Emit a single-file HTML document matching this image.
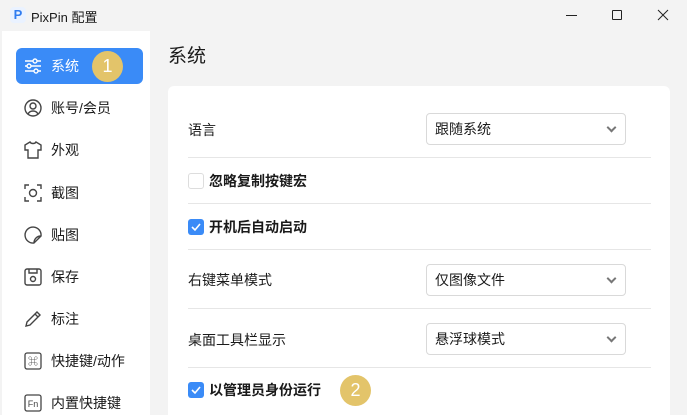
<!DOCTYPE html>
<html><head><meta charset="utf-8"><style>
*{margin:0;padding:0;box-sizing:border-box}
html,body{width:687px;height:415px;overflow:hidden}
body{background:#f3f3f3;font-family:"Liberation Sans","Noto Sans CJK SC",sans-serif;color:#1a1a1a;position:relative}
.abs{position:absolute}
.side{left:2px;top:31px;width:148px;height:384px;background:#fff}
.item{position:absolute;left:16px;width:127px;height:36px;border-radius:6px;font-size:14px;line-height:36px;padding-left:35px}
.item svg{position:absolute;left:8px;top:9px}
.active{background:#3a8bf7;color:#fff}
.card{left:168px;top:86px;width:502px;height:340px;background:#fff;border-radius:6px}
.lbl{position:absolute;left:20px;font-size:14px}
.line{position:absolute;left:20px;right:19px;height:1px;background:#e6e6e6}
.sel{position:absolute;left:258px;width:200px;height:32px;border:1px solid #d9d9d9;border-radius:4px;font-size:14px;line-height:30px;padding-left:8px}
.sel:after{content:"";position:absolute;right:10px;top:10px;width:5px;height:5px;border-right:2px solid #777;border-bottom:2px solid #777;transform:rotate(45deg)}
.cb{position:absolute;left:20px;width:16px;height:16px;border-radius:3px}
.cb.on{background:#3a8bf7}
.cb.off{border:1px solid #ddd}
.cbl{position:absolute;left:41px;font-size:14px;font-weight:bold}
.badge{position:absolute;width:31px;height:31px;border-radius:50%;background:#e3c46a;color:#fff;font-size:18px;text-align:center;line-height:31px}
</style></head><body>
<div class="abs" style="left:10px;top:7px;width:16px;height:16px;border-radius:4px;background:#eaf2ff;color:#2f7cf0;font-weight:bold;font-size:13px;line-height:16px;text-align:center">P</div>
<div class="abs" style="left:31px;top:7px;font-size:13px">PixPin 配置</div>
<div class="abs" style="left:566px;top:15px;width:11px;height:1px;background:#222"></div>
<div class="abs" style="left:612px;top:10px;width:10px;height:10px;border:1px solid #222;border-radius:1px"></div>
<svg class="abs" style="left:657px;top:9px" width="12" height="12"><path d="M1 1L11 11M11 1L1 11" stroke="#222" stroke-width="1"/></svg>
<div class="abs side"></div>
<div class="item active" style="top:48px"><svg width="18" height="18" fill="none" stroke="#fff" stroke-width="1.4"><path d="M1 4h16M1 9h16M1 14h16"/><circle cx="11" cy="4" r="2" fill="#3a8bf7"/><circle cx="5" cy="9" r="2" fill="#3a8bf7"/><circle cx="12" cy="14" r="2" fill="#3a8bf7"/></svg>系统</div>
<div class="badge" style="left:92px;top:51px">1</div>
<div class="item" style="top:90px"><svg width="18" height="18" fill="none" stroke="#444" stroke-width="1.4"><circle cx="9" cy="9" r="8"/><circle cx="9" cy="7" r="3"/><path d="M4 15c2-4 8-4 10 0"/></svg>账号/会员</div>
<div class="item" style="top:132px"><svg width="18" height="18" fill="none" stroke="#444" stroke-width="1.4"><path d="M6 1L1 4v5h3v8h10V9h3V4l-5-3c-1 2-5 2-6 0z"/></svg>外观</div>
<div class="item" style="top:175px"><svg width="18" height="18" fill="none" stroke="#444" stroke-width="1.4"><path d="M1 5V1h4M13 1h4v4M17 13v4h-4M5 17H1v-4"/><circle cx="9" cy="9" r="3.5"/></svg>截图</div>
<div class="item" style="top:217px"><svg width="18" height="18" fill="none" stroke="#444" stroke-width="1.4"><path d="M17 10A8 8 0 1 0 10 17zM17 10c-4 0-7 3-7 7"/></svg>贴图</div>
<div class="item" style="top:259px"><svg width="18" height="18" fill="none" stroke="#444" stroke-width="1.4"><rect x="1" y="1" width="16" height="16" rx="2"/><path d="M5 1v4h8V1"/><circle cx="9" cy="11" r="2.5"/></svg>保存</div>
<div class="item" style="top:301px"><svg width="18" height="18" fill="none" stroke="#444" stroke-width="1.4"><path d="M2 16l1-4L13 2l3 3L6 15zM11 4l3 3"/></svg>标注</div>
<div class="item" style="top:343px"><svg width="18" height="18" fill="none" stroke="#444" stroke-width="1.3"><rect x="1" y="1" width="16" height="16" rx="2"/><text x="9" y="13" font-size="10" text-anchor="middle" fill="#444" stroke="none">⌘</text></svg>快捷键/动作</div>
<div class="item" style="top:385px"><svg width="18" height="18" fill="none" stroke="#444" stroke-width="1.3"><rect x="1" y="1" width="16" height="16" rx="2"/><text x="9" y="13" font-size="9" text-anchor="middle" fill="#444" stroke="none" font-family="Liberation Sans">Fn</text></svg>内置快捷键</div>
<div class="abs" style="left:168px;top:41px;font-size:19px">系统</div>
<div class="abs card">
<div class="lbl" style="top:34px">语言</div>
<div class="sel" style="top:27px">跟随系统</div>
<div class="line" style="top:71px"></div>
<div class="cb off" style="top:87px"></div><div class="cbl" style="top:85px">忽略复制按键宏</div>
<div class="line" style="top:117px"></div>
<div class="cb on" style="top:133px"><svg width="16" height="16"><path d="M4 8l3 3 5-6" stroke="#fff" stroke-width="1.6" fill="none"/></svg></div><div class="cbl" style="top:131px">开机后自动启动</div>
<div class="line" style="top:163px"></div>
<div class="lbl" style="top:184px">右键菜单模式</div>
<div class="sel" style="top:178px">仅图像文件</div>
<div class="line" style="top:222px"></div>
<div class="lbl" style="top:244px">桌面工具栏显示</div>
<div class="sel" style="top:237px">悬浮球模式</div>
<div class="line" style="top:281px"></div>
<div class="cb on" style="top:296px"><svg width="16" height="16"><path d="M4 8l3 3 5-6" stroke="#fff" stroke-width="1.6" fill="none"/></svg></div><div class="cbl" style="top:294px">以管理员身份运行</div>
</div>
<div class="badge" style="left:340px;top:375px">2</div>
</body></html>
